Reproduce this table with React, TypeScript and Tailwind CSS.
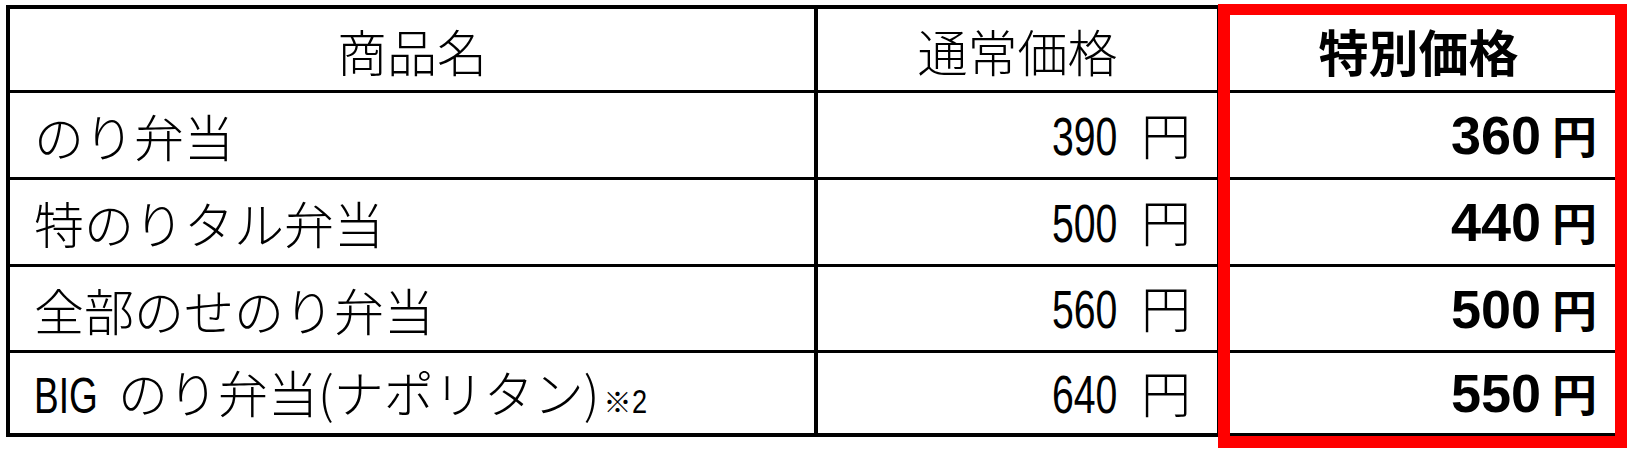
import React from "react";

type Row = { name: React.ReactNode; normal: string; special: string; h: string; last?: boolean };

const rows: Row[] = [
  { name: "のり弁当", normal: "390", special: "360", h: "h-[87px]" },
  { name: "特のりタル弁当", normal: "500", special: "440", h: "h-[87px]" },
  { name: "全部のせのり弁当", normal: "560", special: "500", h: "h-[86px]" },
  {
    name: (
      <>
        <span className="inline-block w-[54px] origin-left scale-x-[0.74] text-[50px] font-normal font-['Liberation_Sans',sans-serif]">BIG</span>
        <span className="ml-[30px]">のり弁当</span>
        <span>(</span>
        ナポリタン
        <span>)</span>
        <span className="ml-[4px] text-[28px]">※</span>
        <span className="inline-block origin-left scale-x-[0.8] text-[34px] font-['Liberation_Sans',sans-serif]">2</span>
      </>
    ),
    normal: "640",
    special: "550",
    h: "h-[80px]",
    last: true,
  },
];

export default function App() {
  return (
    <div className="relative w-[1630px] h-[450px] bg-white overflow-hidden text-black font-['Noto_Sans_CJK_JP',sans-serif]">
      <div className="ml-[6px] mt-[5px] w-[1614px] border-4 border-black">
        <div className="flex h-[84px] border-b-[3px] border-black">
          <div className="w-[808px] border-r-4 border-black flex items-center justify-center text-[50px] font-light leading-none">
            商品名
          </div>
          <div className="w-[403px] border-r-4 border-black flex items-center justify-center text-[50px] font-light leading-none">
            通常価格
          </div>
          <div className="flex-1 flex items-center justify-center text-[50px] font-bold leading-none">
            特別価格
          </div>
        </div>
        {rows.map((r, i) => (
          <div key={i} className={`flex ${r.h} ${r.last ? "" : "border-b-[3px] border-black"}`}>
            <div className="w-[808px] border-r-4 border-black flex items-center pl-[24px] text-[50px] font-light leading-none whitespace-nowrap">
              <span className="flex items-baseline">{r.name}</span>
            </div>
            <div className="w-[403px] border-r-4 border-black flex items-center justify-end pr-[26px] leading-none whitespace-nowrap">
              <span className="flex items-baseline">
                <span className="inline-block origin-right scale-x-[0.74] text-[53px] font-['Liberation_Sans',sans-serif]">{r.normal}</span>
                <span className="ml-[24px] text-[50px] font-light">円</span>
              </span>
            </div>
            <div className="flex-1 flex items-center justify-end pr-[19px] leading-none whitespace-nowrap font-bold">
              <span className="flex items-baseline">
                <span className="text-[54px] font-['Liberation_Sans',sans-serif]">{r.special}</span>
                <span className="ml-[11px] text-[45px]">円</span>
              </span>
            </div>
          </div>
        ))}
      </div>
      <div className="absolute left-[1218px] top-[4px] w-[409px] h-[444px] border-[12px] border-t-[11px] border-[#ff0000]" />
    </div>
  );
}
